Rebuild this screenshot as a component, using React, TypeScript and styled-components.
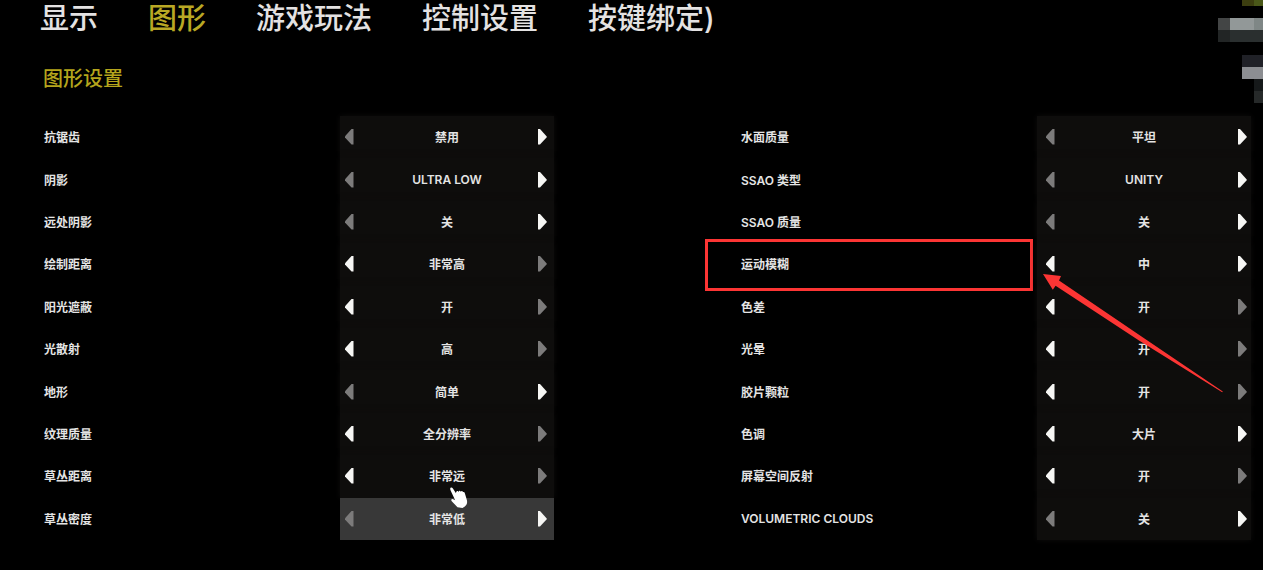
import React from "react";
import styled, { createGlobalStyle } from "styled-components";

const GlobalStyle = createGlobalStyle`
  * { box-sizing: border-box; }
  body {
    margin: 0;
    background: #000;
    color: #e4e4e4;
    font-family: Inter, "Noto Sans CJK SC", sans-serif;
  }
`;

const Page = styled.main`
  position: relative;
  min-height: 100vh;
  overflow: hidden;
  padding: 0 12px 28px 44px;
  background: #000;
`;

const Tabs = styled.nav`
  display: flex;
  gap: 50px;
  height: 38px;
  margin-left: -4px;
`;

const Tab = styled.button<{ $active?: boolean }>`
  padding: 0;
  border: 0;
  background: none;
  color: ${(p) => (p.$active ? "#b9a824" : "#e4e2e2")};
  font-family: Inter, "Noto Sans CJK SC", sans-serif;
  font-size: 29px;
  font-weight: 500;
  line-height: 38px;
  white-space: nowrap;
  cursor: pointer;
`;

const Title = styled.h1`
  margin: 26px 0 24px -1px;
  color: #b5a51c;
  font-family: "Noto Sans CJK SC", sans-serif;
  font-size: 20px;
  font-weight: 500;
  line-height: 28px;
`;

const Columns = styled.div`
  display: grid;
  grid-template-columns: 1fr 1fr;
  gap: 187px;
`;

const Column = styled.section`
  display: grid;
  grid-auto-rows: 1fr;
  min-height: 424px;
`;

const Row = styled.div`
  position: relative;
  display: flex;
`;

const Label = styled.div`
  position: relative;
  flex: 1;
  display: flex;
  align-items: center;
  padding-bottom: 1px;
  font-size: 12px;
  font-weight: 600;
  white-space: nowrap;
`;

const Stepper = styled.div<{ $active?: boolean }>`
  position: relative;
  display: grid;
  grid-template-columns: 20px 1fr 20px;
  align-items: center;
  width: 214px;
  background: ${(p) => (p.$active ? "#383838" : "#0e0d0c")};
  box-shadow: ${(p) => (p.$active ? "none" : "0 0 6px #0e0d0c")};
`;

const Value = styled.output`
  padding-bottom: 1px;
  font-size: 12px;
  font-weight: 600;
  text-align: center;
  white-space: nowrap;
`;

const ArrowButton = styled.button<{ $side: "left" | "right"; $inset: number }>`
  display: flex;
  justify-content: ${(p) => (p.$side === "left" ? "flex-start" : "flex-end")};
  padding: 0;
  padding-${(p) => p.$side}: ${(p) => p.$inset}px;
  border: 0;
  background: none;
  color: #f6f6f4;
  cursor: pointer;
  &:disabled {
    color: #7c7b7b;
    cursor: default;
  }
`;

const Frame = styled.div`
  position: absolute;
  inset: -4px 4px -5px -36px;
  border: 3px solid #fc3534;
  pointer-events: none;
`;

const Pointer = styled.svg`
  position: absolute;
  top: 31px;
  right: 28px;
  z-index: 2;
  pointer-events: none;
`;

const Hand = styled.svg`
  position: absolute;
  top: 32px;
  left: 110px;
  z-index: 2;
  pointer-events: none;
`;

const Mosaic = styled.svg`
  position: absolute;
  top: 0;
  right: 0;
`;

type Option = {
  label: string;
  value: string;
  prev?: boolean;
  next?: boolean;
  active?: boolean;
  framed?: boolean;
  hand?: boolean;
};

const left: Option[] = [
  { label: "抗锯齿", value: "禁用", next: true },
  { label: "阴影", value: "ULTRA LOW", next: true },
  { label: "远处阴影", value: "关", next: true },
  { label: "绘制距离", value: "非常高", prev: true },
  { label: "阳光遮蔽", value: "开", prev: true },
  { label: "光散射", value: "高", prev: true },
  { label: "地形", value: "简单", next: true },
  { label: "纹理质量", value: "全分辨率", prev: true },
  { label: "草丛距离", value: "非常远", prev: true, hand: true },
  { label: "草丛密度", value: "非常低", next: true, active: true },
];

const right: Option[] = [
  { label: "水面质量", value: "平坦", next: true },
  { label: "SSAO 类型", value: "UNITY", next: true },
  { label: "SSAO 质量", value: "关", next: true },
  { label: "运动模糊", value: "中", prev: true, next: true, framed: true },
  { label: "色差", value: "开", prev: true },
  { label: "光晕", value: "开", prev: true },
  { label: "胶片颗粒", value: "开", prev: true },
  { label: "色调", value: "大片", prev: true, next: true },
  { label: "屏幕空间反射", value: "开", prev: true },
  { label: "VOLUMETRIC CLOUDS", value: "关", next: true },
];

const tabs = ["显示", "图形", "游戏玩法", "控制设置", "按键绑定)"];

// x, y, width, height, colour of each block
const blocks: [number, number, number, number, string][] = [
  [24, 0, 12, 6, "#3c3e10"],
  [36, 0, 9, 6, "#4a5819"],
  [0, 18, 12, 12, "#434545"],
  [12, 18, 24, 12, "#929898"],
  [36, 18, 9, 12, "#7f8786"],
  [0, 30, 12, 12, "#222525"],
  [12, 30, 33, 12, "#2a2f2f"],
  [24, 55, 21, 12, "#202127"],
  [24, 67, 21, 12, "#8c8e92"],
  [36, 79, 9, 12, "#16191a"],
  [36, 91, 9, 12, "#262929"],
];

function Triangle({ side }: { side: "left" | "right" }) {
  return (
    <svg width="9" height="16" viewBox="0 0 9 16" aria-hidden="true">
      <path
        fill="currentColor"
        d={side === "left" ? "M8.5 0V15.5H6.5L0 8.4V7.2L6.5 0Z" : "M0 0V15.5H2L8.5 8.4V7.2L2 0Z"}
      />
    </svg>
  );
}

function OptionColumn({
  id,
  options,
  insets,
}: {
  id: string;
  options: Option[];
  insets: [number, number];
}) {
  return (
    <Column>
      {options.map((o, i) => (
        <Row key={o.label} role="group" aria-labelledby={`${id}-${i}`}>
          <Label>
            <span id={`${id}-${i}`}>{o.label}</span>
            {o.framed && <Frame />}
          </Label>
          <Stepper $active={o.active}>
            <ArrowButton $side="left" $inset={insets[0]} disabled={!o.prev} aria-label="上一项">
              <Triangle side="left" />
            </ArrowButton>
            <Value>{o.value}</Value>
            <ArrowButton $side="right" $inset={insets[1]} disabled={!o.next} aria-label="下一项">
              <Triangle side="right" />
            </ArrowButton>
            {o.hand && (
              <Hand width="18" height="22" viewBox="0 0 18 22" aria-hidden="true">
                <path
                  fill="#fff"
                  d="M.6.8C1.4.1 2.3.7 2.9 1.5L6 6.2C6.1 4.6 6.8 3.5 7.9 4.1L8.6 5C8.9 3.6 10.1 3.2 10.8 4.7C11.3 3.5 12.6 3.6 13 5.2C14 4.7 14.7 5.4 15 6.8L17 13.4C17.5 16 16.7 18 14.8 19.4L12.5 21L7.5 20.2L2 14.6C.8 13.4 1.2 11.9 2.6 12L5.2 13.2L.6 3.4C.1 2.3 0 1.5.6.8Z"
                />
              </Hand>
            )}
          </Stepper>
          {o.framed && (
            <Pointer width="180" height="119" viewBox="0 0 180 119" aria-hidden="true">
              <path
                fill="#fc3534"
                d="M0 0L18 2L16 6.4L100 63.5L179.8 117.6L179.2 118.2L96 66.5L12.6 11.7L9.8 15.8Z"
              />
            </Pointer>
          )}
        </Row>
      ))}
    </Column>
  );
}

export default function App() {
  return (
    <>
      <GlobalStyle />
      <Page>
        <Tabs>
          {tabs.map((t) => (
            <Tab key={t} $active={t === "图形"}>
              {t}
            </Tab>
          ))}
        </Tabs>
        <Title>图形设置</Title>
        <Columns>
          <OptionColumn id="left" options={left} insets={[5, 7]} />
          <OptionColumn id="right" options={right} insets={[9, 4]} />
        </Columns>
        <Mosaic width="45" height="103" viewBox="0 0 45 103" shapeRendering="crispEdges" aria-hidden="true">
          {blocks.map(([x, y, w, h, c]) => (
            <rect key={`${x}-${y}`} x={x} y={y} width={w} height={h} fill={c} />
          ))}
        </Mosaic>
      </Page>
    </>
  );
}
